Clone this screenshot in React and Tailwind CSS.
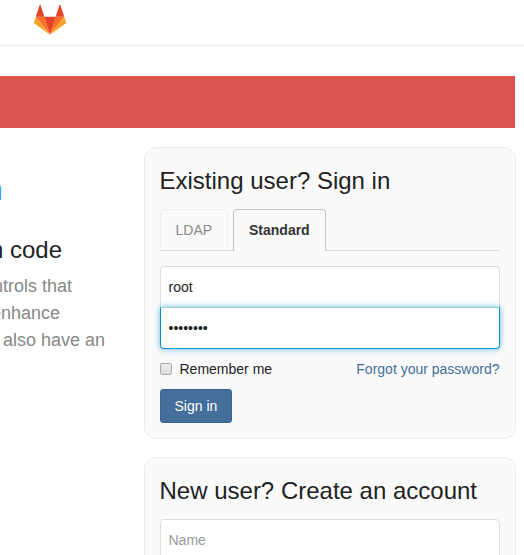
import React from 'react';

function Logo() {
  return (
    <svg className="ml-[34px] mt-[5px] block h-[30px] w-8" viewBox="0 0 32 30">
      <path fill="#e24329" d="M16 29.6 22.1 11.7H9.9z" />
      <path fill="#fc6d26" d="M16 29.6 10.1 11.7H1.8z" />
      <path fill="#fca326" d="M1.8 11.7 0 17.2a1.2 1.2 0 0 0 .45 1.4L16 29.8z" />
      <path fill="#e24329" d="M1.8 11.7h8.6L6.7.4c-.2-.6-1-.6-1.2 0z" />
      <path fill="#fc6d26" d="M16 29.6 21.9 11.7h8.3z" />
      <path fill="#fca326" d="M30.2 11.7l1.8 5.5a1.2 1.2 0 0 1-.45 1.4L16 29.8z" />
      <path fill="#e24329" d="M30.2 11.7h-8.6L25.3.4c.2-.6 1-.6 1.2 0z" />
    </svg>
  );
}

function Panel({ title, className, children }) {
  return (
    <section className={`rounded-[12px] border border-[#ebebeb] bg-[#fafafa] px-[15px] pt-[18px] ${className}`}>
      <h3 className="text-[24px] leading-[30px] text-[#222]">{title}</h3>
      {children}
    </section>
  );
}

function Line({ width, children }) {
  return (
    <div className={`flex justify-end whitespace-nowrap ${width}`}>
      <span>{children}</span>
    </div>
  );
}

export default function App() {
  return (
    <div className="h-[555px] w-[524px] overflow-hidden bg-white font-['Liberation_Sans',Arial,sans-serif] text-[14px] leading-5 text-[#222]">
      <header className="h-[46px] overflow-hidden border-b border-[#eee]">
        <Logo />
      </header>
      <div className="mt-[30px] h-[52px] w-[515px] bg-[#d9534f]" />
      <main className="mt-[19px] flex">
        <div className="w-[143.5px] shrink-0">
          <div className="mt-[23px] text-[32px] leading-[38px] text-[#2b87dc]">
            <Line width="w-[2.8px]">n</Line>
          </div>
          <div className="mt-[27px] text-[24px] leading-[30px]">
            <Line width="w-[62px]">n code</Line>
          </div>
          <div className="mt-[8px] text-[18px] leading-[27px] text-[#888]">
            <Line width="w-[72px]">controls that</Line>
            <Line width="w-[60px]">enhance</Line>
            <Line width="w-[105px]">also have an</Line>
          </div>
        </div>
        <div className="w-[372px] shrink-0">
          <Panel title="Existing user? Sign in" className="h-[292px]">
            <div className="mt-[13px] flex h-[42px] items-start border-b border-[#ddd]">
              <div className="mr-[5px] h-[41px] w-[68px] rounded-t-[4px] border border-b-0 border-[#eee] pl-[15px] pt-[10px] text-[#888]">
                LDAP
              </div>
              <div className="h-[42px] w-[93px] rounded-t-[4px] border border-b-0 border-[#c5c5c5] bg-[#fafafa] pl-[15.5px] pt-[10px] font-bold text-[#333]">
                Standard
              </div>
            </div>
            <div className="mt-[15px] h-[42px] rounded-t-[4px] border border-[#ddd] bg-white px-2 pt-[10px]">root</div>
            <div className="relative -mt-px h-[42px] rounded-b-[4px] border border-t-[#a5cad8] border-x-[#0093cf] border-b-[#0093cf] bg-white px-2 pt-[10px] shadow-[0_0_6px_rgba(0,147,207,0.6)]">
              ••••••••
            </div>
            <div className="mt-[10px] flex items-center justify-between">
              <label className="flex items-center gap-2">
                <span className="block h-3 w-3 rounded-[2px] border border-[#aaa] bg-gradient-to-b from-[#eee] to-[#ddd]" />
                Remember me
              </label>
              <a className="text-[#446e9b]">Forgot your password?</a>
            </div>
            <button className="mt-[10px] block h-[34px] w-[72px] rounded-[3px] border border-[#3d638b] bg-[#446e9b] pl-[14px] text-left text-[14px] leading-5 text-white">
              Sign in
            </button>
          </Panel>
          <Panel title="New user? Create an account" className="mt-[18px] h-[292px]">
            <div className="mt-[13px] h-[42px] rounded-t-[4px] border border-[#ddd] bg-white px-2 pt-[10px] text-[#999]">
              Name
            </div>
          </Panel>
        </div>
      </main>
    </div>
  );
}
